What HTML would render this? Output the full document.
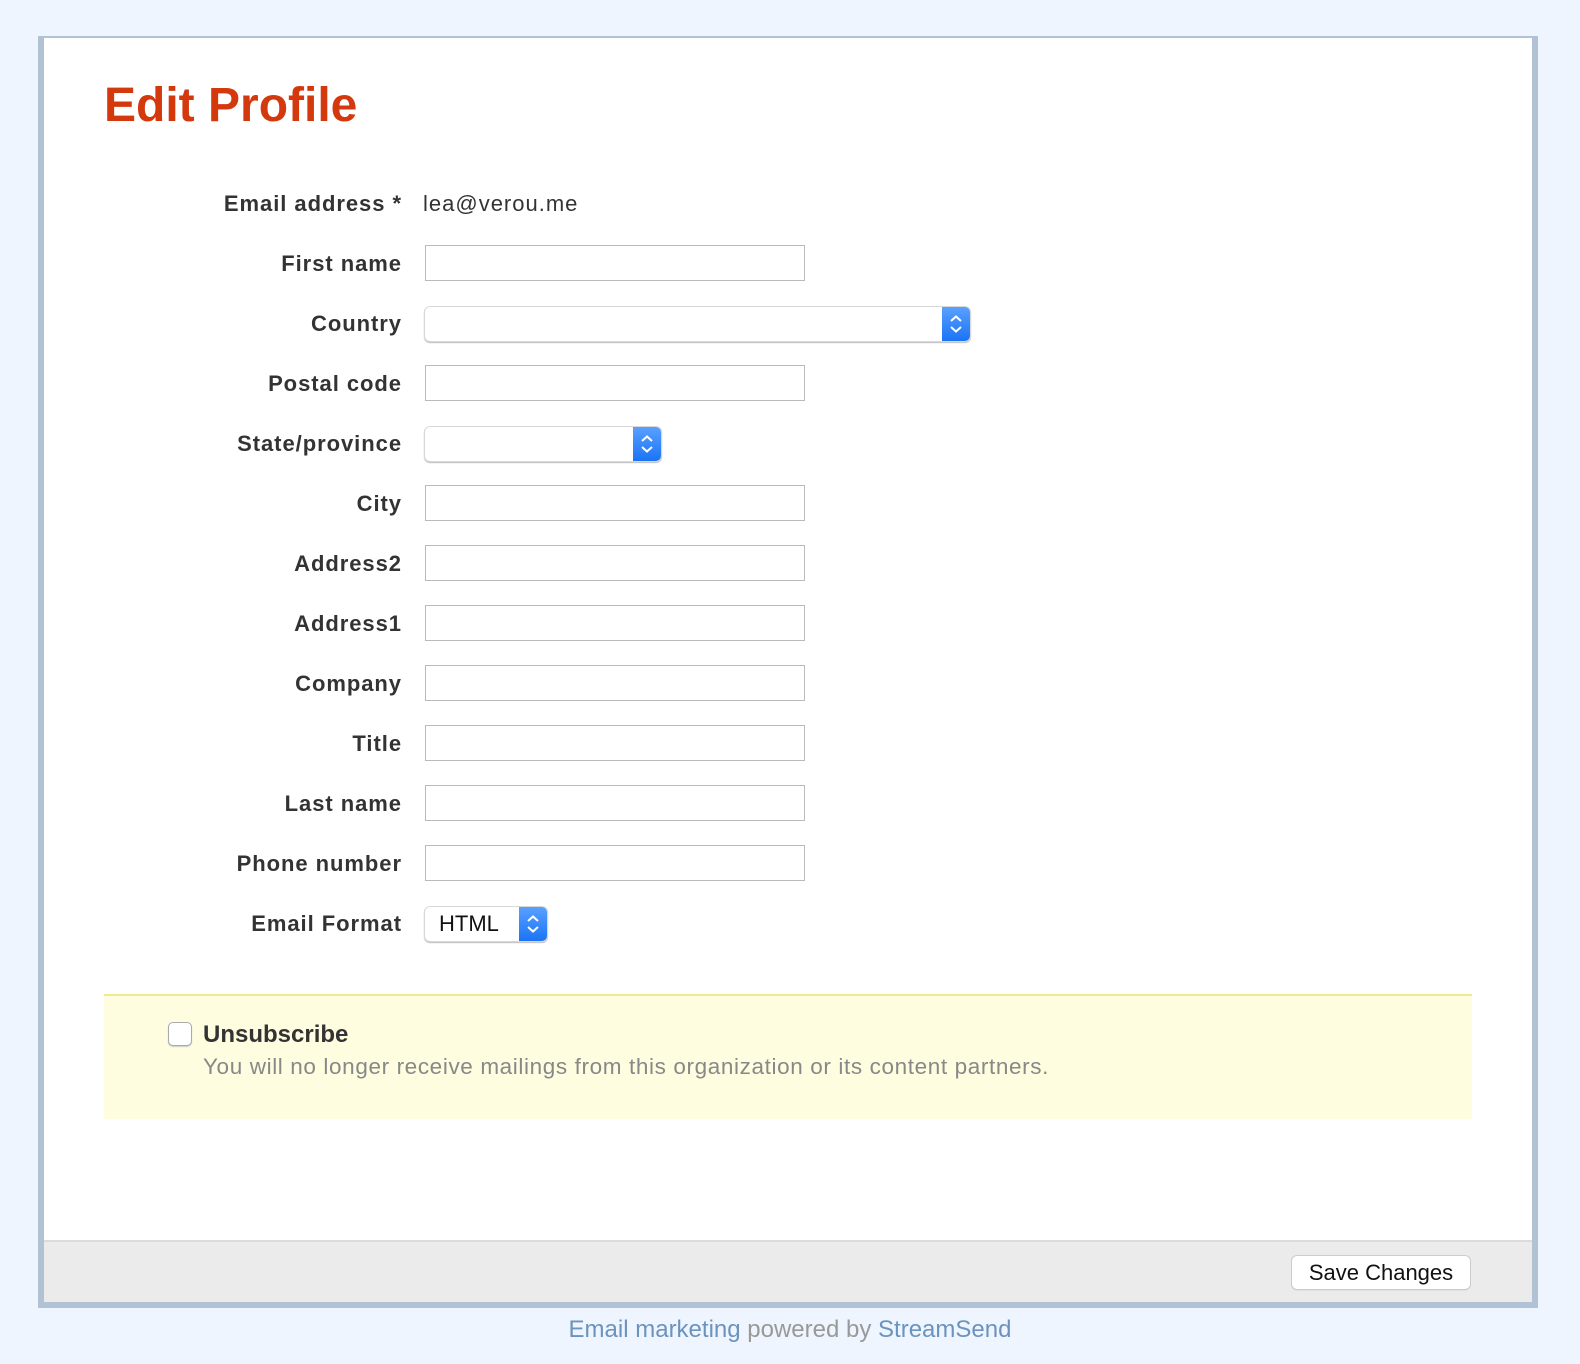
<!DOCTYPE html>
<html><head><meta charset="utf-8"><style>
*{box-sizing:border-box;margin:0;padding:0}
body{width:1580px;height:1364px;background:#eef5fe;font-family:"Liberation Sans",Arial,sans-serif;position:relative;overflow:hidden}
.panel{position:absolute;left:38px;top:36px;width:1500px;height:1272px;background:#fff;border:6px solid #b0c2d4;border-top-width:2px}
.abs{position:absolute}
h1{position:absolute;left:104px;top:77px;font-size:48px;font-weight:bold;color:#d4380d;line-height:58px}
.lbl{position:absolute;right:1178px;font-size:22px;font-weight:bold;color:#333;line-height:26px;text-align:right;white-space:nowrap;letter-spacing:0.95px}
.inp{position:absolute;left:425px;width:380px;height:36px;border:1px solid #bbb;background:#fff}
.sel{position:absolute;left:425px;height:34px;border-radius:5px;background:#fff;box-shadow:0 0 0 1px #d8d8d8,0 1px 1px 1px #bbb;overflow:hidden}
.sel .b{position:absolute;right:0;top:0;width:28px;height:100%;background:linear-gradient(#5aa0ff,#1a74f5)}
.sel svg{position:absolute;left:7px;top:8px}
.yel{position:absolute;left:104px;top:994px;width:1368px;height:125px;background:#fefddf;border-top:2px solid #f2e98e}
.foot{position:absolute;left:44px;top:1240px;width:1488px;height:62px;background:#ebebeb;border-top:2px solid #dcdcdc}
.btn{position:absolute;left:1292px;top:1256px;width:178px;height:33px;background:#fff;border-radius:5px;box-shadow:0 0 0 1px #ccc,0 1px 1px #aaa;font-size:22px;line-height:33px;text-align:center;color:#111}
</style></head><body>
<div class="panel"></div>
<h1>Edit Profile</h1>
<div class="lbl" style="top:191px">Email address *</div>
<div class="abs" style="left:423px;top:191px;font-size:22px;line-height:26px;color:#333;letter-spacing:1px">lea@verou.me</div>
<div class="lbl" style="top:251px">First name</div><div class="inp" style="top:245px"></div>
<div class="lbl" style="top:311px">Country</div>
<div class="sel" style="top:307px;width:545px"><div class="b"><svg width="14" height="18" viewBox="0 0 14 18"><path d="M2 6 L7 1.5 L12 6 M2 12 L7 16.5 L12 12" fill="none" stroke="#fff" stroke-width="2"/></svg></div></div>
<div class="lbl" style="top:371px">Postal code</div><div class="inp" style="top:365px"></div>
<div class="lbl" style="top:431px">State/province</div>
<div class="sel" style="top:427px;width:236px"><div class="b"><svg width="14" height="18" viewBox="0 0 14 18"><path d="M2 6 L7 1.5 L12 6 M2 12 L7 16.5 L12 12" fill="none" stroke="#fff" stroke-width="2"/></svg></div></div>
<div class="lbl" style="top:491px">City</div><div class="inp" style="top:485px"></div>
<div class="lbl" style="top:551px">Address2</div><div class="inp" style="top:545px"></div>
<div class="lbl" style="top:611px">Address1</div><div class="inp" style="top:605px"></div>
<div class="lbl" style="top:671px">Company</div><div class="inp" style="top:665px"></div>
<div class="lbl" style="top:731px">Title</div><div class="inp" style="top:725px"></div>
<div class="lbl" style="top:791px">Last name</div><div class="inp" style="top:785px"></div>
<div class="lbl" style="top:851px">Phone number</div><div class="inp" style="top:845px"></div>
<div class="lbl" style="top:911px">Email Format</div>
<div class="sel" style="top:907px;width:122px"><span style="position:absolute;left:14px;top:0;line-height:34px;font-size:22px;color:#111">HTML</span><div class="b"><svg width="14" height="18" viewBox="0 0 14 18"><path d="M2 6 L7 1.5 L12 6 M2 12 L7 16.5 L12 12" fill="none" stroke="#fff" stroke-width="2"/></svg></div></div>
<div class="yel"></div>
<div class="abs" style="left:168px;top:1022px;width:24px;height:24px;border:1px solid #aaa;border-radius:5px;background:#fff;box-shadow:0 1px 1px #ccc"></div>
<div class="abs" style="left:203px;top:1021px;font-size:24px;font-weight:bold;color:#333;line-height:28px">Unsubscribe</div>
<div class="abs" style="left:203px;top:1053px;font-size:22.5px;color:#888;line-height:28px;white-space:nowrap;letter-spacing:0.62px">You will no longer receive mailings from this organization or its content partners.</div>
<div class="foot"></div>
<div class="btn">Save Changes</div>
<div class="abs" style="left:0;width:1580px;top:1316px;text-align:center;font-size:24px;line-height:28px;color:#999">
<span style="color:#6b93bd">Email marketing</span> powered by <span style="color:#6b93bd">StreamSend</span></div>
</body></html>
